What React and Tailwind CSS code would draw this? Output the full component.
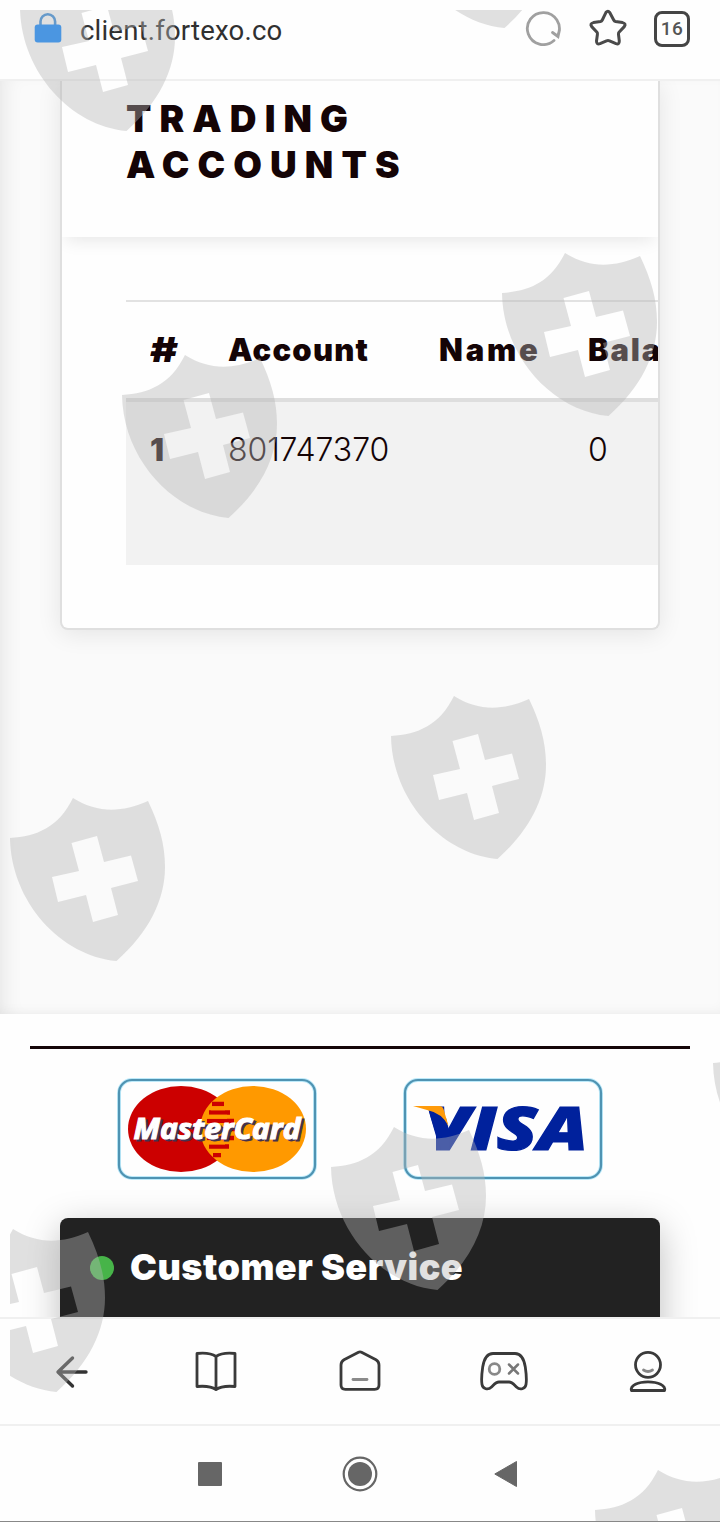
import React from 'react';

const tabs = [
  { id: 'back', icon: BackIcon },
  { id: 'reader', icon: BookIcon },
  { id: 'home', icon: HomeIcon },
  { id: 'games', icon: GamepadIcon },
  { id: 'profile', icon: ProfileIcon },
];

// top left corner of every shield in the overlay
const shields = [
  [387, -151],
  [9, -48],
  [491, 237],
  [111, 339],
  [380, 680],
  [-1, 782],
  [702, 1007],
  [320, 1111],
  [-61, 1213],
  [584, 1454],
];

function BackIcon() {
  return (
    <svg className="w-12 h-12" viewBox="0 0 48 48" fill="none" stroke="#333" strokeWidth="3.400" strokeLinecap="round" strokeLinejoin="round">
      <path d="M24.500 10L10 24L24.500 38M10.500 24H38" />
    </svg>
  );
}

function BookIcon() {
  return (
    <svg className="w-12 h-12" viewBox="0 0 48 48" fill="none" stroke="#3a3a3a" strokeWidth="2.800" strokeLinejoin="round">
      <path d="M24 8.500C19 5 13 4.700 5 5.500V38.500C13 37.800 19 38 24 41.500C29 38 35 37.800 43 38.500V5.500C35 4.700 29 5 24 8.500ZM24 8.500V41" />
    </svg>
  );
}

function HomeIcon() {
  return (
    <svg className="w-12 h-12" viewBox="0 0 48 48" fill="none" stroke="#3a3a3a" strokeWidth="2.800" strokeLinecap="round" strokeLinejoin="round">
      <path d="M22.500 4.200Q24 3.400 25.500 4.200L40 11.800Q43 13.500 43 17V37Q43 41.300 38.700 41.300H9.300Q5 41.300 5 37V17Q5 13.500 8 11.800Z" />
      <path d="M17 31.500H31" stroke="#8a8a8a" />
    </svg>
  );
}

function GamepadIcon() {
  return (
    <svg className="w-12 h-12" viewBox="0 0 48 48" fill="none" stroke="#3a3a3a" strokeWidth="2.800" strokeLinecap="round" strokeLinejoin="round">
      <path d="M13 5.500H35C41 5.500 44 11 45.300 19C46.300 26 46.800 32 46 36.500C45.200 41 40 42.500 36.500 39C33 35.500 32 34 29 34H19C16 34 15 35.500 11.500 39C8 42.500 2.800 41 2 36.500C1.200 32 1.700 26 2.700 19C4 11 7 5.500 13 5.500Z" />
      <circle cx="14.500" cy="21" r="5.300" stroke="#888" />
      <path d="M29 16.500L38 25.500M38 16.500L29 25.500" stroke="#777" strokeWidth="2.500" />
    </svg>
  );
}

function ProfileIcon() {
  return (
    <svg className="w-12 h-12" viewBox="0 0 48 48" fill="none" stroke="#3a3a3a" strokeWidth="2.800" strokeLinecap="round" strokeLinejoin="round">
      <circle cx="24" cy="16.800" r="12.500" />
      <path d="M19.500 22Q24 25 28.500 22" stroke="#888" />
      <path d="M7.500 42.500C6 37.500 14 33.800 24 33.800S42 37.500 40.500 42.500Z" />
    </svg>
  );
}

const AddressBar = () => (
  <header className="h-[81px] shrink-0 bg-[#fefefe] border-b-2 border-[#f0f0f0] flex items-start justify-between pt-[10px] pl-[34px] pr-[30px]">
    <div className="flex items-center h-10">
      <svg className="w-7 h-8 -mt-1" viewBox="0 0 28 32" fill="none">
        <path d="M6.500 14V9.500a7.300 7.300 0 0 1 14.600 0V14" stroke="#2f86d8" strokeWidth="2.600" />
        <rect x="0.700" y="12.500" width="26.600" height="18" rx="3" fill="#0080ff" />
      </svg>
      <span className="ml-[18px] mt-px font-['Roboto'] text-[27.500px] leading-10 tracking-[0.200px] text-[#303030]">client.fortexo.co</span>
    </div>
    <div className="flex items-start">
      <svg className="w-9 h-9 -ml-px mr-px" viewBox="0 0 36 36" fill="none" stroke="#a0a0a0" strokeWidth="2.800" strokeLinecap="round">
        <path d="M29 30.500A16 16 0 1 1 33 25M27.500 22.500L33 26.500L34.500 20" />
      </svg>
      <svg className="w-10 h-10 ml-[26px] -mt-px" viewBox="0 0 40 40" fill="none" stroke="#4a4a4a" strokeWidth="3" strokeLinejoin="round">
        <path d="M18 3.300Q20 1 21.600 3.300L25.700 11Q26.300 12.200 27.500 12.500L34.500 13.600Q38.500 14.700 36.300 17.600L31 23.200Q30.300 24 30.500 25.500L31.300 32Q31.300 36 28 34.700L21.500 31.900Q20 31.300 18.500 31.900L12 34.700Q8.500 36 8.500 32L9.400 25.500Q9.700 24 9 23.200L3.700 17.600Q1.500 14.700 5.500 13.600L12.500 12.500Q13.700 12.200 14.300 11Z" />
      </svg>
      <div className="w-9 h-9 ml-[26px] mt-[1px] rounded-lg border-3 border-[#454545] flex items-center justify-center font-['Roboto'] font-medium text-[19px] tracking-[0.500px] text-[#555]">16</div>
    </div>
  </header>
);

const AccountsCard = () => (
  <section className="mx-[60px] h-[549px] border-2 border-t-0 border-[#dfdfdf] rounded-b-lg bg-[#fefefe] overflow-hidden shadow-[0_4px_24px_rgba(0,0,0,0.09)]">
    <div className="h-[156px] pl-16 pt-[15px] shadow-[0_8px_16px_-4px_rgba(0,0,0,0.09)]">
      <h1 className="font-['Inter'] font-black text-[37px] leading-[46px] text-[#140406]">
        <span className="block tracking-[8.100px]">TRADING</span>
        <span className="block tracking-[8.100px]">ACCOUNTS</span>
      </h1>
    </div>
    <div className="pl-16 pt-[63px]">
      <div className="w-[640px] font-['Inter'] text-[#140406]">
        <div className="h-[102px] border-t-2 border-b-4 border-t-[#e2e2e2] border-b-[#dedede] grid grid-cols-[78px_211px_149px_1fr] pl-6 items-center text-[31px] font-black">
          <span className="text-[34px] leading-10">
            <span className="inline-block origin-left scale-x-125">#</span>
          </span>
          <span className="tracking-[1.200px]">Account</span>
          <span className="tracking-[2.800px]">Name</span>
          <span className="tracking-[1.800px]">Balance</span>
        </div>
        <div className="h-[163px] bg-[#f2f2f2] grid grid-cols-[78px_211px_149px_1fr] pl-6 pt-6 items-start text-[32px] leading-[48px] font-light">
          <span className="font-black text-[31px]">1</span>
          <span className="tracking-[-0.100px]">801747370</span>
          <span></span>
          <span>0</span>
        </div>
      </div>
    </div>
  </section>
);

const CardFrame = ({ children }) => (
  <svg className="w-[200px] h-[102px]" viewBox="0 0 200 102">
    <rect x="2" y="2" width="196" height="98" rx="13" fill="#fefefe" stroke="#bdeafa" strokeWidth="4" />
    <rect x="2" y="2" width="196" height="98" rx="13" fill="none" stroke="#4f93b2" strokeWidth="2.200" />
    {children}
  </svg>
);

const MasterCard = () => (
  <CardFrame>
    <ellipse cx="64" cy="51" rx="53" ry="43" fill="#cc0000" />
    <ellipse cx="136" cy="51" rx="53" ry="43" fill="#ff9900" />
    <path d="M95 26H107M92 34.500H113M90 43H117M88 51H118M90 60H117M92 68.500H112M96 77H104" stroke="#cc0000" strokeWidth="4.500" />
    <path d="M94 30.300H108M88 38.800H110M86 47H112M92 73H106M87 64.500H108" stroke="#ff9900" strokeWidth="4" />
    <text x="19" y="62.500" textLength="167" lengthAdjust="spacingAndGlyphs" className="font-['Open_Sans'] font-bold italic text-[29px]" fill="#44314f" stroke="#44314f" strokeWidth="0.800">MasterCard</text>
    <text x="16.500" y="60.500" textLength="167" lengthAdjust="spacingAndGlyphs" className="font-['Open_Sans'] font-bold italic text-[29px]" fill="#fff" stroke="#fff" strokeWidth="1.100">MasterCard</text>
  </CardFrame>
);

const Visa = () => (
  <CardFrame>
    <text x="21" y="71.500" textLength="164" lengthAdjust="spacingAndGlyphs" className="font-['Open_Sans'] font-extrabold italic text-[60px]" fill="#00219c" stroke="#00219c" strokeWidth="1.200">VISA</text>
    {/* orange wing covers the upper left serif of the V */}
    <path d="M18 26.500H27.500L26 34L33 58V74H18Z" fill="#fefefe" />
    <path d="M25.500 32L38 72H46L47 56L43 40Z" fill="#00219c" />
    <path d="M10 28H36Q39.500 28 40.500 31L45.500 48Q39 35 24 32Z" fill="#ff9b0a" />
  </CardFrame>
);

const Footer = () => (
  <footer className="h-[303px] shrink-0 bg-[#fefefe] pt-8 overflow-hidden">
    <div className="mx-[30px] h-[3px] bg-[#140608]" />
    <div className="mt-[29px] ml-[117px] flex gap-[86px]">
      <MasterCard />
      <Visa />
    </div>
    <div className="mx-[60px] mt-[38px] h-[130px] rounded-t-lg bg-[#222] shadow-[0_10px_36px_rgba(0,0,0,0.26)] flex items-start pt-[25px] pl-[30px]">
      <span className="mt-[13px] w-6 h-6 rounded-full bg-[#47b449]" />
      <span className="ml-4 font-['Inter'] font-black text-[36px] leading-[48px] tracking-[0.480px] text-white whitespace-nowrap">Customer Service</span>
    </div>
  </footer>
);

const ShieldOverlay = () => (
  <svg className="absolute inset-0 w-[720px] h-[1522px] pointer-events-none" viewBox="0 0 720 1522">
    <defs>
      <clipPath id="overlay-area">
        <rect x="10" y="10" width="710" height="1511" />
      </clipPath>
    </defs>
    <g clipPath="url(#overlay-area)" fill="#b5b5b5" fillOpacity="0.410" fillRule="evenodd">
      {shields.map(([x, y]) => (
        <path
          key={`${x}-${y}`}
          transform={`translate(${x} ${y})`}
          d="M11 56C38 54 59 46 74 16C98 31 122 31 149 19C160 42 166 62 166 85C166 118 150 150 117.500 179C62 174 12 120 11 56ZM72.500 61L80 89L53 95L59 120L87 113L94 140L119 133L112 106L139 99L132 73.500L105 80L98 54Z"
        />
      ))}
    </g>
  </svg>
);

const App = () => {
  return (
    <div className="relative w-[720px] h-[1522px] flex flex-col overflow-hidden bg-[#fefefe]">
      <AddressBar />

      <main className="h-[933px] shrink-0 overflow-hidden bg-[#fafafa] shadow-[inset_16px_0_20px_-12px_rgba(0,0,0,0.08),inset_0_-8px_14px_-8px_rgba(0,0,0,0.06)]">
        <AccountsCard />
      </main>

      <Footer />

      {/* Browser toolbar */}
      <nav className="h-[109px] shrink-0 border-t-2 border-b-2 border-[#f0f0f0] bg-[#fefefe] grid grid-cols-5 items-center justify-items-center">
        {tabs.map(({ id, icon: Icon }) => (
          <button key={id}>
            <Icon />
          </button>
        ))}
      </nav>

      {/* System navigation */}
      <div className="h-24 shrink-0 border-b border-[#888] bg-[#fefefe] flex items-center pl-[198px]">
        <span className="w-6 h-6 rounded-[1px] bg-[#666]" />
        <svg className="w-9 h-9 ml-[120px]" viewBox="0 0 36 36">
          <circle cx="18" cy="18" r="16.300" fill="none" stroke="#666" strokeWidth="2.200" />
          <circle cx="18" cy="18" r="12" fill="#666" />
        </svg>
        <svg className="w-6 h-7 ml-[116px]" viewBox="0 0 24 28">
          <path d="M22.500 1.500V26.500L.8 14Z" fill="#666" stroke="#666" strokeLinejoin="round" />
        </svg>
      </div>

      <ShieldOverlay />
    </div>
  );
};

export default App;
